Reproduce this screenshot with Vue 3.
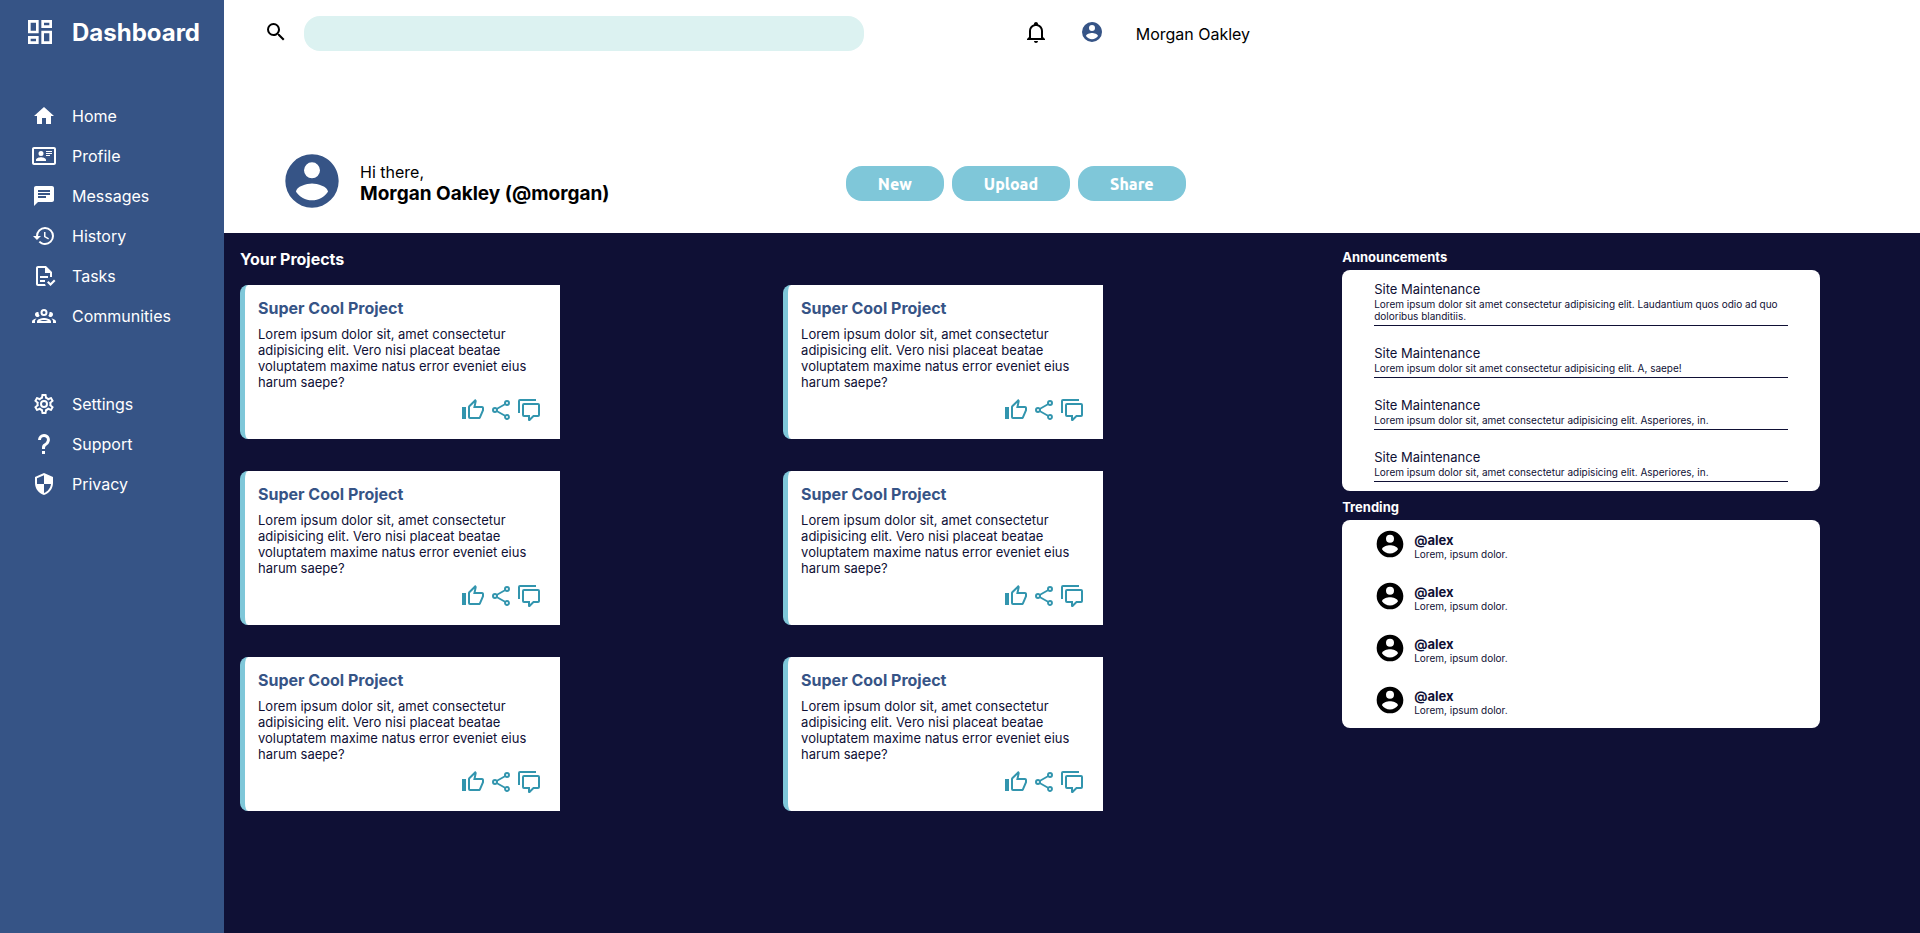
<script setup>
const icons = {
  dashboard: 'M19,5V7H15V5H19M9,5V11H5V5H9M19,13V19H15V13H19M9,17V19H5V17H9M21,3H13V9H21V3M11,3H3V13H11V3M21,11H13V21H21V11M11,15H3V21H11V15Z',
  home: 'M10,20V14H14V20H19V12H22L12,3L2,12H5V20H10Z',
  profile: 'M22,3H2C0.91,3.04 0.04,3.91 0,5V19C0.04,20.09 0.91,20.96 2,21H22C23.09,20.96 23.96,20.09 24,19V5C23.96,3.91 23.09,3.04 22,3M22,19H2V5H22V19M14,17V15.75C14,14.09 10.66,13.25 9,13.25C7.34,13.25 4,14.09 4,15.75V17H14M9,7A2.5,2.5 0 0,0 6.5,9.5A2.5,2.5 0 0,0 9,12A2.5,2.5 0 0,0 11.5,9.5A2.5,2.5 0 0,0 9,7M14,7V8H20V7H14M14,9V10H20V9H14M14,11V12H18V11H14',
  messages: 'M20 2H4c-1.1 0-1.99.9-1.99 2L2 22l4-4h14c1.1 0 2-.9 2-2V4c0-1.1-.9-2-2-2zM6 9h12v2H6V9zm8 5H6v-2h8v2zm4-6H6V6h12v2z',
  history: 'M13.5,8H12V13L16.28,15.54L17,14.33L13.5,12.25V8M13,3A9,9 0 0,0 4,12H1L4.96,16.03L9,12H6A7,7 0 0,1 13,5A7,7 0 0,1 20,12A7,7 0 0,1 13,19C11.07,19 9.32,18.21 8.06,16.94L6.64,18.36C8.27,20 10.5,21 13,21A9,9 0 0,0 22,12A9,9 0 0,0 13,3',
  tasks: 'M23.5 17L18.5 22L15 18.5L16.5 17L18.5 19L22 15.5L23.5 17M6 2C4.89 2 4 2.89 4 4V20C4 21.11 4.89 22 6 22H13.81C13.45 21.38 13.2 20.7 13.08 20H6V4H13V9H18V13.08C18.33 13.03 18.67 13 19 13C19.34 13 19.67 13.03 20 13.08V8L14 2M8 12V14H16V12M8 16V18H13V16Z',
  communities: 'M12,5A3.5,3.5 0 0,0 8.5,8.5A3.5,3.5 0 0,0 12,12A3.5,3.5 0 0,0 15.5,8.5A3.5,3.5 0 0,0 12,5M12,7A1.5,1.5 0 0,1 13.5,8.5A1.5,1.5 0 0,1 12,10A1.5,1.5 0 0,1 10.5,8.5A1.5,1.5 0 0,1 12,7M5.5,8A2.5,2.5 0 0,0 3,10.5C3,11.44 3.53,12.25 4.29,12.68C4.65,12.88 5.06,13 5.5,13C5.94,13 6.35,12.88 6.71,12.68C7.08,12.47 7.39,12.17 7.62,11.81C6.89,10.86 6.5,9.7 6.5,8.5C6.5,8.41 6.5,8.31 6.5,8.22C6.2,8.08 5.86,8 5.5,8M18.5,8C18.14,8 17.8,8.08 17.5,8.22C17.5,8.31 17.5,8.41 17.5,8.5C17.5,9.7 17.11,10.86 16.38,11.81C16.5,12 16.63,12.15 16.78,12.3C16.94,12.45 17.1,12.58 17.29,12.68C17.65,12.88 18.06,13 18.5,13C18.94,13 19.35,12.88 19.71,12.68C20.47,12.25 21,11.44 21,10.5A2.5,2.5 0 0,0 18.5,8M12,14C9.66,14 5,15.17 5,17.5V19H19V17.5C19,15.17 14.34,14 12,14M4.71,14.55C2.78,14.78 0,15.76 0,17.5V19H3V17.07C3,16.06 3.69,15.22 4.71,14.55M19.29,14.55C20.31,15.22 21,16.06 21,17.07V19H24V17.5C24,15.76 21.22,14.78 19.29,14.55M12,16C13.53,16 15.24,16.5 16.23,17H7.77C8.76,16.5 10.47,16 12,16Z',
  settings: 'M12,8A4,4 0 0,1 16,12A4,4 0 0,1 12,16A4,4 0 0,1 8,12A4,4 0 0,1 12,8M12,10A2,2 0 0,0 10,12A2,2 0 0,0 12,14A2,2 0 0,0 14,12A2,2 0 0,0 12,10M10,22C9.75,22 9.54,21.82 9.5,21.58L9.13,18.93C8.5,18.68 7.96,18.34 7.44,17.94L4.95,18.95C4.73,19.03 4.46,18.95 4.34,18.73L2.34,15.27C2.21,15.05 2.27,14.78 2.46,14.63L4.57,12.97L4.5,12L4.57,11L2.46,9.37C2.27,9.22 2.21,8.95 2.34,8.73L4.34,5.27C4.46,5.05 4.73,4.96 4.95,5.05L7.44,6.05C7.96,5.66 8.5,5.32 9.13,5.07L9.5,2.42C9.54,2.18 9.75,2 10,2H14C14.25,2 14.46,2.18 14.5,2.42L14.87,5.07C15.5,5.32 16.04,5.66 16.56,6.05L19.05,5.05C19.27,4.96 19.54,5.05 19.66,5.27L21.66,8.73C21.79,8.95 21.73,9.22 21.54,9.37L19.43,11L19.5,12L19.43,13L21.54,14.63C21.73,14.78 21.79,15.05 21.66,15.27L19.66,18.73C19.54,18.95 19.27,19.04 19.05,18.95L16.56,17.95C16.04,18.34 15.5,18.68 14.87,18.93L14.5,21.58C14.46,21.82 14.25,22 14,22H10M11.25,4L10.88,6.61C9.68,6.86 8.62,7.5 7.85,8.39L5.44,7.35L4.69,8.65L6.8,10.2C6.4,11.37 6.4,12.64 6.8,13.8L4.68,15.36L5.43,16.66L7.86,15.62C8.63,16.5 9.68,17.14 10.87,17.38L11.24,20H12.76L13.13,17.39C14.32,17.14 15.37,16.5 16.14,15.62L18.57,16.66L19.32,15.36L17.2,13.81C17.6,12.64 17.6,11.37 17.2,10.2L19.31,8.65L18.56,7.35L16.15,8.39C15.38,7.5 14.32,6.86 13.12,6.62L12.75,4H11.25Z',
  support: 'M10,19H13V22H10V19M12,2C17.35,2.22 19.68,7.62 16.5,11.67C15.67,12.67 14.33,13.33 13.67,14.17C13,15 13,16 13,17H10C10,15.33 10,13.92 10.67,12.92C11.33,11.92 12.67,11.33 13.5,10.67C15.92,8.43 15.32,5.26 12,5A3,3 0 0,0 9,8H6A6,6 0 0,1 12,2Z',
  privacy: 'M12,12H19C18.47,16.11 15.72,19.78 12,20.92V12H5V6.3L12,3.19M12,1L3,5V11C3,16.55 6.84,21.73 12,23C17.16,21.73 21,16.55 21,11V5L12,1Z',
  search: 'M9.5,3A6.5,6.5 0 0,1 16,9.5C16,11.11 15.41,12.59 14.44,13.73L14.71,14H15.5L20.5,19L19,20.5L14,15.5V14.71L13.73,14.44C12.59,15.41 11.11,16 9.5,16A6.5,6.5 0 0,1 3,9.5A6.5,6.5 0 0,1 9.5,3M9.5,5C7,5 5,7 5,9.5C5,12 7,14 9.5,14C12,14 14,12 14,9.5C14,7 12,5 9.5,5Z',
  bell: 'M10 21H14C14 22.1 13.1 23 12 23S10 22.1 10 21M21 19V20H3V19L5 17V11C5 7.9 7.03 5.17 10 4.29C10 4.19 10 4.1 10 4C10 2.9 10.9 2 12 2S14 2.9 14 4C14 4.1 14 4.19 14 4.29C16.97 5.17 19 7.9 19 11V17L21 19M17 11C17 8.24 14.76 6 12 6S7 8.24 7 11V18H17V11Z',
  account: 'M12,19.2C9.5,19.2 7.29,17.92 6,16C6.03,14 10,12.9 12,12.9C14,12.9 17.97,14 18,16C16.71,17.92 14.5,19.2 12,19.2M12,5A3,3 0 0,1 15,8A3,3 0 0,1 12,11A3,3 0 0,1 9,8A3,3 0 0,1 12,5M12,2A10,10 0 0,0 2,12A10,10 0 0,0 12,22A10,10 0 0,0 22,12C22,6.47 17.5,2 12,2Z',
  like: 'M5,9V21H1V9H5M9,21A2,2 0 0,1 7,19V9C7,8.45 7.22,7.95 7.59,7.59L14.17,1L15.23,2.06C15.5,2.33 15.67,2.7 15.67,3.11L15.64,3.43L14.69,8H21C22.11,8 23,8.9 23,10V12C23,12.26 22.95,12.5 22.86,12.73L19.84,19.78C19.54,20.5 18.83,21 18,21H9M9,19H18.03L21,12V10H12.21L13.34,4.68L9,9.03V19Z',
  share: 'M18,2A3,3 0 0,0 15,5C15,5.24 15.03,5.47 15.09,5.7L8.04,9.81C7.5,9.31 6.79,9 6,9A3,3 0 0,0 3,12A3,3 0 0,0 6,15C6.79,15 7.5,14.69 8.04,14.19L15.16,18.34C15.11,18.55 15.08,18.77 15.08,19C15.08,20.61 16.39,21.91 18,21.91C19.61,21.91 20.92,20.61 20.92,19A2.92,2.92 0 0,0 18,16.08C17.24,16.08 16.56,16.38 16.04,16.85L8.91,12.7C8.96,12.47 9,12.24 9,12C9,11.76 8.96,11.53 8.91,11.3L15.96,7.19C16.5,7.69 17.21,8 18,8A3,3 0 0,0 21,5A3,3 0 0,0 18,2M18,4A1,1 0 0,1 19,5A1,1 0 0,1 18,6A1,1 0 0,1 17,5A1,1 0 0,1 18,4M6,11A1,1 0 0,1 7,12A1,1 0 0,1 6,13A1,1 0 0,1 5,12A1,1 0 0,1 6,11M18,18A1,1 0 0,1 19,19A1,1 0 0,1 18,20A1,1 0 0,1 17,19A1,1 0 0,1 18,18Z',
  comment: 'M12,23A1,1 0 0,1 11,22V19H7A2,2 0 0,1 5,17V7A2,2 0 0,1 7,5H21A2,2 0 0,1 23,7V17A2,2 0 0,1 21,19H16.9L13.2,22.71C13,22.9 12.75,23 12.5,23H12M13,17V20.08L16.08,17H21V7H7V17H13M3,15H1V3A2,2 0 0,1 3,1H19V3H3V15Z',
}

const mainNav = [
  { label: 'Home', icon: 'home' },
  { label: 'Profile', icon: 'profile' },
  { label: 'Messages', icon: 'messages' },
  { label: 'History', icon: 'history' },
  { label: 'Tasks', icon: 'tasks' },
  { label: 'Communities', icon: 'communities' },
]
const secondaryNav = [
  { label: 'Settings', icon: 'settings' },
  { label: 'Support', icon: 'support' },
  { label: 'Privacy', icon: 'privacy' },
]

const actions = ['New', 'Upload', 'Share']

const projects = Array.from({ length: 6 }, (_, id) => ({
  id,
  title: 'Super Cool Project',
  text: 'Lorem ipsum dolor sit, amet consectetur adipisicing elit. Vero nisi placeat beatae voluptatem maxime natus error eveniet eius harum saepe?',
}))
const projectActions = [
  { label: 'Like', icon: 'like' },
  { label: 'Share', icon: 'share' },
  { label: 'Comment', icon: 'comment' },
]

const announcements = [
  'Lorem ipsum dolor sit amet consectetur adipisicing elit. Laudantium quos odio ad quo doloribus blanditiis.',
  'Lorem ipsum dolor sit amet consectetur adipisicing elit. A, saepe!',
  'Lorem ipsum dolor sit, amet consectetur adipisicing elit. Asperiores, in.',
  'Lorem ipsum dolor sit, amet consectetur adipisicing elit. Asperiores, in.',
]

const trending = Array.from({ length: 4 }, (_, id) => ({ id, user: '@alex', text: 'Lorem, ipsum dolor.' }))
</script>

<template>
  <div class="layout">
    <aside class="sidebar">
      <div class="brand">
        <svg class="icon icon-md" viewBox="0 0 24 24" aria-hidden="true"><path :d="icons.dashboard" /></svg>
        <h1>Dashboard</h1>
      </div>
      <nav class="nav" aria-label="Main">
        <ul v-for="(group, g) in [mainNav, secondaryNav]" :key="g">
          <li v-for="item in group" :key="item.label">
            <a href="#">
              <svg class="icon" viewBox="0 0 24 24" aria-hidden="true"><path :d="icons[item.icon]" /></svg>
              {{ item.label }}
            </a>
          </li>
        </ul>
      </nav>
    </aside>

    <div class="page">
      <header class="header">
        <div class="topbar">
          <label class="search-label" for="search" aria-label="Search">
            <svg class="icon" viewBox="0 0 24 24" aria-hidden="true"><path :d="icons.search" /></svg>
          </label>
          <input id="search" class="search" type="search" />
          <div class="user">
            <button class="icon-button" type="button" aria-label="Notifications">
              <svg class="icon" viewBox="0 0 24 24" aria-hidden="true"><path :d="icons.bell" /></svg>
            </button>
            <svg class="icon avatar" viewBox="0 0 24 24" aria-hidden="true"><path :d="icons.account" /></svg>
            <span class="user-name">Morgan Oakley</span>
          </div>
        </div>
        <div class="welcome">
          <div class="greeting">
            <svg class="icon icon-lg avatar" viewBox="0 0 24 24" aria-hidden="true"><path :d="icons.account" /></svg>
            <div>
              <p>Hi there,</p>
              <p class="greeting-name">Morgan Oakley (@morgan)</p>
            </div>
          </div>
          <div class="actions">
            <button v-for="action in actions" :key="action" class="action" type="button">{{ action }}</button>
          </div>
        </div>
      </header>

      <main class="content">
        <section>
          <h2 class="projects-heading">Your Projects</h2>
          <div class="projects">
            <article v-for="project in projects" :key="project.id" class="card">
              <h3>{{ project.title }}</h3>
              <p>{{ project.text }}</p>
              <div class="card-actions">
                <button v-for="a in projectActions" :key="a.label" class="icon-button" type="button" :aria-label="a.label">
                  <svg class="icon" viewBox="0 0 24 24" aria-hidden="true"><path :d="icons[a.icon]" /></svg>
                </button>
              </div>
            </article>
          </div>
        </section>

        <div class="side">
          <section>
            <h2 class="side-heading">Announcements</h2>
            <div class="panel announcements">
              <article v-for="(text, i) in announcements" :key="i" class="announcement">
                <h3>Site Maintenance</h3>
                <p>{{ text }}</p>
              </article>
            </div>
          </section>
          <section>
            <h2 class="side-heading">Trending</h2>
            <ul class="panel">
              <li v-for="item in trending" :key="item.id" class="trend">
                <svg class="icon icon-md" viewBox="0 0 24 24" aria-hidden="true"><path :d="icons.account" /></svg>
                <div class="trend-text">
                  <h3>{{ item.user }}</h3>
                  <p>{{ item.text }}</p>
                </div>
              </li>
            </ul>
          </section>
        </div>
      </main>
    </div>
  </div>
</template>

<style>
body {
  margin: 0;
}
</style>

<style scoped>
.layout {
  display: grid;
  grid-template-columns: 224px minmax(0, 1fr);
  min-height: 100vh;
  font-family: Inter, "Liberation Sans", sans-serif;
  font-size: 16px;
  line-height: 20px;
  color: #0f1035;
}
h1, h2, h3, p, ul {
  margin: 0;
  padding: 0;
}
ul {
  list-style: none;
}
.icon {
  display: block;
  flex: none;
  width: 24px;
  height: 24px;
  fill: currentColor;
}
.icon-md {
  width: 32px;
  height: 32px;
}
.icon-lg {
  width: 64px;
  height: 64px;
  margin-bottom: 5px;
}
.icon-button {
  padding: 0;
  border: 0;
  background: none;
  color: inherit;
  cursor: pointer;
}

.sidebar {
  background: #365486;
  color: #fff;
}
.brand {
  display: flex;
  align-items: flex-start;
  gap: 16px;
  padding: 16px 24px;
}
.brand h1 {
  font-size: 24px;
  line-height: 34px;
}
.nav {
  display: grid;
  gap: 48px;
  padding: 30px 32px 0;
}
.nav a {
  display: flex;
  align-items: center;
  gap: 16px;
  height: 40px;
  color: inherit;
  text-decoration: none;
}

.page {
  display: flex;
  flex-direction: column;
}
.header {
  display: grid;
  gap: 97px;
  padding: 16px 0 15px;
  background: #fff;
  color: #000;
}
.topbar {
  display: flex;
  align-items: flex-start;
}
.topbar .icon {
  margin-top: 4px;
}
.search-label {
  margin-left: 40px;
}
.search {
  box-sizing: border-box;
  width: 33%;
  height: 35px;
  margin-left: 16px;
  padding: 0 16px;
  border: 0;
  border-radius: 16px;
  background: #dcf2f1;
  font: inherit;
}
.user {
  display: flex;
  align-items: flex-start;
  gap: 32px;
  margin-left: 160px;
}
.user-name {
  line-height: 36px;
}
.avatar {
  color: #365486;
}
.welcome {
  display: grid;
  grid-template-columns: 11fr 19fr;
  align-items: center;
}
.greeting {
  display: flex;
  align-items: center;
  gap: 16px;
  padding-left: 56px;
}
.greeting-name {
  font-size: 19px;
  line-height: 23px;
  font-weight: 700;
}
.actions {
  display: flex;
  gap: 8px;
}
.action {
  height: 35px;
  padding: 0 32px;
  border: 0;
  border-radius: 16px;
  background: #7fc7d9;
  color: #fff;
  font: 800 16px/20px Ubuntu, "Noto Sans", sans-serif;
  cursor: pointer;
}

.content {
  display: grid;
  grid-template-columns: 29fr 15fr;
  gap: 16px;
  flex: 1;
  align-items: start;
  padding: 16px;
  background: #0f1035;
}
.projects-heading {
  margin-bottom: 16px;
  color: #fff;
  font-size: 16px;
}
.projects {
  display: grid;
  grid-template-columns: 1fr 1fr;
  row-gap: 32px;
}
.card {
  box-sizing: border-box;
  display: grid;
  gap: 8px;
  width: 320px;
  padding: 13px 19px 17px 13px;
  border-left: 5px solid #7fc7d9;
  border-radius: 8px 0 0 8px;
  background: #fff;
}
.card h3 {
  color: #365486;
  font-size: 16px;
}
.card p {
  font-size: 13px;
  line-height: 16px;
}
.card-actions {
  display: flex;
  justify-content: flex-end;
  gap: 4px;
  color: #3295ae;
}

.side {
  display: grid;
  gap: 8px;
  width: 85%;
}
.side-heading {
  margin-bottom: 4px;
  color: #fff;
  font-size: 13px;
  line-height: 17px;
}
.panel {
  padding: 0 32px;
  border-radius: 8px;
  background: #fff;
}
.panel h3 {
  font-size: 13px;
  line-height: 16px;
}
.panel p {
  font-size: 10px;
  line-height: 12px;
}
.announcements {
  display: grid;
  gap: 19px;
  padding: 11px 32px 9px;
}
.announcement {
  display: grid;
  gap: 1px;
  padding-bottom: 3px;
  border-bottom: 1px solid #0f1035;
}
.announcement h3 {
  font-weight: 400;
}
.trend {
  display: flex;
  align-items: flex-start;
  gap: 8px;
  padding: 8px 0 12px;
}
.trend .icon {
  color: #000;
}
.trend-text {
  padding-top: 4px;
}
</style>
